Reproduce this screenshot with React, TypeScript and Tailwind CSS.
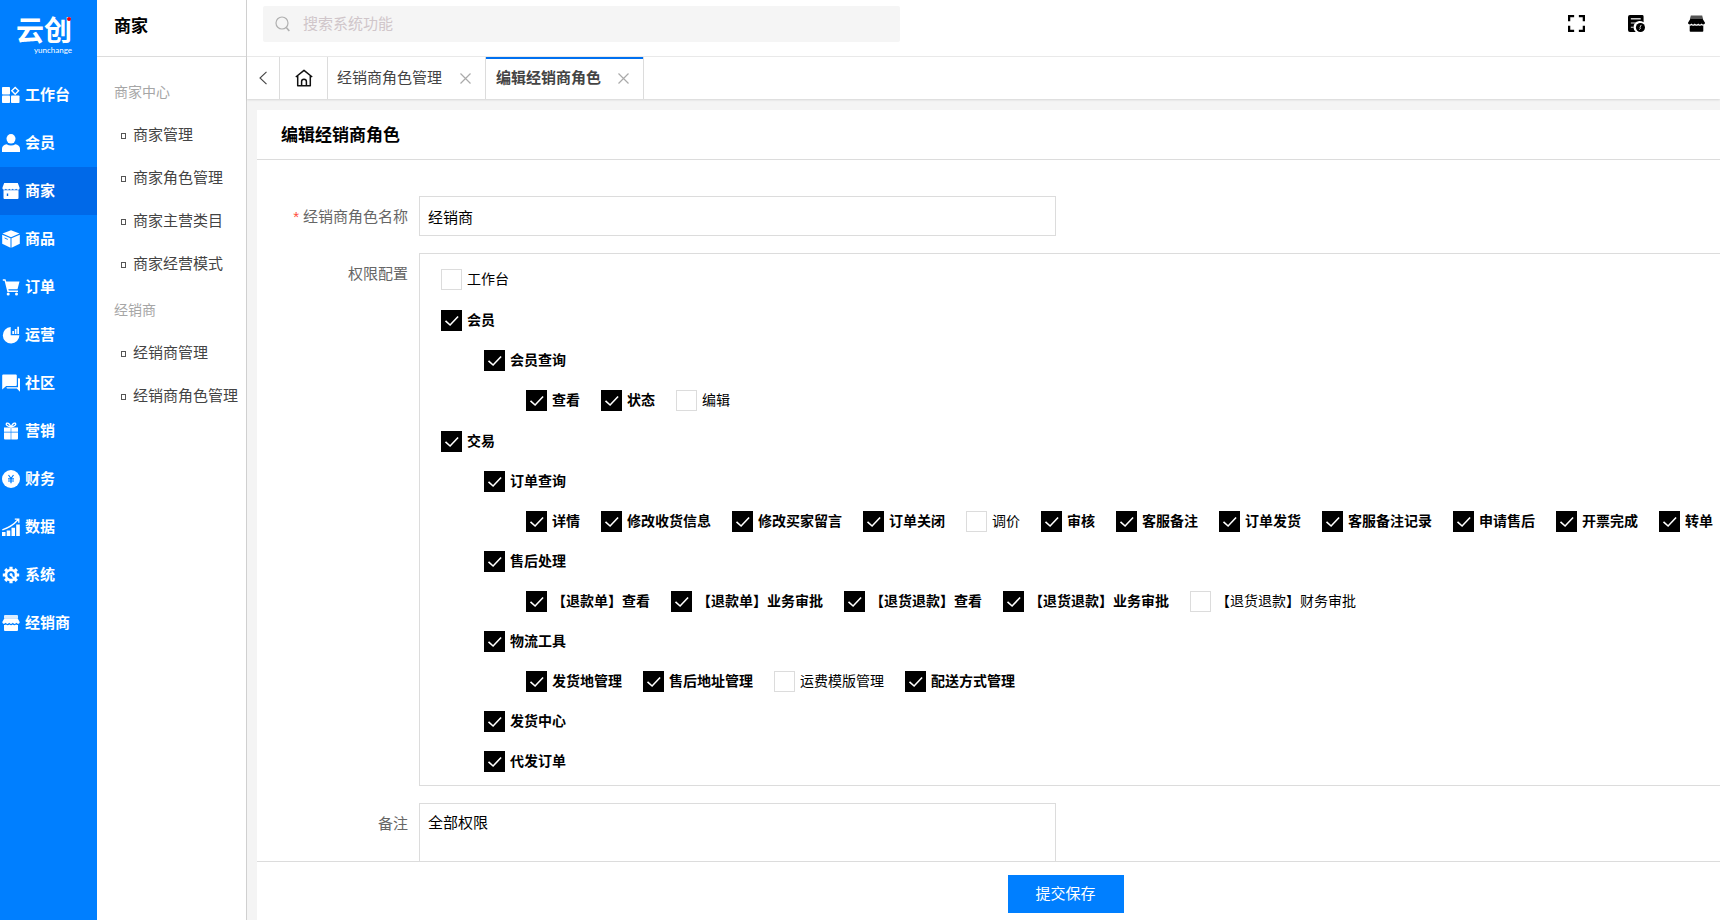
import { useState } from 'react';
import type { ReactNode } from 'react';

interface PermNode {
    name: string;
    checked: boolean;
    children?: PermNode[];
}

const on = (name: string, children?: PermNode[]): PermNode => ({ name, checked: true, children });
const off = (name: string): PermNode => ({ name, checked: false });

const permissions: PermNode[] = [
    off('工作台'),
    on('会员', [on('会员查询', [on('查看'), on('状态'), off('编辑')])]),
    on('交易', [
        on('订单查询', [
            on('详情'),
            on('修改收货信息'),
            on('修改买家留言'),
            on('订单关闭'),
            off('调价'),
            on('审核'),
            on('客服备注'),
            on('订单发货'),
            on('客服备注记录'),
            on('申请售后'),
            on('开票完成'),
            on('转单')
        ]),
        on('售后处理', [
            on('【退款单】查看'),
            on('【退款单】业务审批'),
            on('【退货退款】查看'),
            on('【退货退款】业务审批'),
            off('【退货退款】财务审批')
        ]),
        on('物流工具', [on('发货地管理'), on('售后地址管理'), off('运费模版管理'), on('配送方式管理')]),
        on('发货中心'),
        on('代发订单')
    ])
];

const Icon = ({ children, className = 'size-[18px]' }: { children: ReactNode; className?: string }) => (
    <svg viewBox="0 0 18 18" fill="currentColor" aria-hidden="true" className={`${className} shrink-0`}>
        {children}
    </svg>
);

const navItems: { name: string; icon: ReactNode }[] = [
    {
        name: '工作台',
        icon: (
            <>
                <rect x="0" y="1" width="8" height="7.5" rx="0.8" />
                <rect x="0" y="9.5" width="8" height="7.5" rx="0.8" />
                <rect x="9" y="9.5" width="8.5" height="7.5" rx="0.8" />
                <path d="M13.2 1.4 16.6 4.8 13.2 8.2 9.8 4.8Z" fill="none" stroke="currentColor" strokeWidth="1.4" />
            </>
        )
    },
    {
        name: '会员',
        icon: (
            <>
                <ellipse cx="9" cy="4.8" rx="4.5" ry="4.8" />
                <path d="M0 18v-3.2C0 12 2 10.6 4.6 10.2c1.3.8 2.8 1.2 4.4 1.2s3.100-.4 4.400-1.200C16 10.600 18 12 18 14.800V18Z" />
            </>
        )
    },
    {
        name: '商家',
        icon: (
            <>
                <path d="M2.200 1h13.600L17.500 5.500v1.200c-.4 1.300-2.600 1.300-3.400 0-.8 1.300-2.600 1.300-3.400 0-.8 1.300-2.600 1.300-3.400 0-.8 1.300-2.600 1.300-3.400 0-.8 1.300-2.900 1.300-3.400 0V5.500Z" />
                <path fillRule="evenodd" d="M1.500 8.300h15V16a1 1 0 0 1-1 1h-13a1 1 0 0 1-1-1ZM4.800 11.500v2.500h1.400v-2.500Z" />
            </>
        )
    },
    {
        name: '商品',
        icon: (
            <>
                <path d="M9 .3 17.500 3.600 9 7.200.5 3.600Z" />
                <path d="M.2 4.800 8.500 8.300v9.400L.2 13.800Z" />
                <path d="M17.800 4.800 9.500 8.300v9.400l8.300-3.900Z" />
                <path d="m2.600 8 3.200 1.400" stroke="#007fff" strokeWidth="0.9" />
            </>
        )
    },
    {
        name: '订单',
        icon: (
            <>
                <path d="M.8 1.200h2.700l.7 2.300h13.300l-2 7.700H6.300l.5 1.400h9.200V14H5.400L2.600 2.800H.8Z" />
                <circle cx="6.200" cy="15.900" r="1.500" />
                <circle cx="14.500" cy="15.900" r="1.500" />
            </>
        )
    },
    {
        name: '运营',
        icon: (
            <>
                <path d="M8.700 1v8.300h8.700A8.300 8.300 0 1 1 8.700 1Z" />
                <path d="M10.300 5h1.700v3h-1.700ZM12.800 3h1.700v5h-1.700ZM15.300.800H17V8h-1.700Z" />
            </>
        )
    },
    {
        name: '社区',
        icon: (
            <>
                <path d="M1.200.5h12.600a1 1 0 0 1 1 1v9.600a1 1 0 0 1-1 1H4.200L.2 15.500v-14a1 1 0 0 1 1-1Z" />
                <path d="M16 4.300h1.200a.8.8 0 0 1 .8.800v12.600l-3.200-3.200H5.500a1 1 0 0 1-1-1v-.3H16Z" />
            </>
        )
    },
    {
        name: '营销',
        icon: (
            <>
                <path d="M2 5.500h6.700v4.300H2ZM9.300 5.500H16v4.300H9.300ZM2 10.500h6.700V17.500H3a1 1 0 0 1-1-1ZM9.300 10.500H16v6a1 1 0 0 1-1 1H9.300Z" />
                <path
                    d="M9 5C7.800 2.200 6.300.700 4.900 1.200 3.500 1.900 4.300 4.400 9 5c4.700-.6 5.500-3.100 4.100-3.800C11.700.700 10.200 2.200 9 5Z"
                    fill="none"
                    stroke="currentColor"
                    strokeWidth="1.300"
                />
            </>
        )
    },
    {
        name: '财务',
        icon: (
            <>
                <circle cx="9" cy="9" r="9" />
                <path d="m6.500 5 2.500 3.500L11.500 5M9 8.500v4.800M6 8.800h6M6 11h6" fill="none" stroke="#007fff" strokeWidth="1.200" />
            </>
        )
    },
    {
        name: '数据',
        icon: (
            <>
                <path d="M0 14h3.500v4H0ZM4.700 12.500h3.600V18H4.700ZM9.500 9.700H13V18H9.500ZM14.200 6.500h3.600V18h-3.600Z" />
                <path d="M.3 11.800C6.500 10 11.500 7 16 1.800M12.800 1.200h4v3.600" fill="none" stroke="currentColor" strokeWidth="1.300" />
            </>
        )
    },
    {
        name: '系统',
        icon: (
            <>
                <circle cx="9" cy="9" r="5" fill="none" stroke="currentColor" strokeWidth="2.600" />
                <path
                    d="M9 .8v3M9 14.200v3M.8 9h3M14.200 9h3M3.200 3.200l2.100 2.100M12.700 12.700l2.100 2.100M3.200 14.800l2.100-2.100M12.700 5.300l2.100-2.100"
                    stroke="currentColor"
                    strokeWidth="3.200"
                />
                <path d="m9 9 4.500 4.800" stroke="currentColor" strokeWidth="1.800" />
                <circle cx="9" cy="8.500" r="1.500" />
            </>
        )
    },
    {
        name: '经销商',
        icon: (
            <>
                <path d="M3 1h12a1 1 0 0 1 1 1v2.200H2V2a1 1 0 0 1 1-1Z" opacity="0.850" />
                <path d="M2.400 4.200h13.200L17.700 8c0 2-2.400 2.300-3.300.8-.9 1.500-2.700 1.500-3.600 0-.9 1.500-2.700 1.500-3.600 0-.9 1.500-2.700 1.500-3.600 0C2.700 10.300.3 10 .3 8Z" />
                <path d="M2 11c1 .2 1.600 0 2-.4 1 .9 2.500.9 3.300 0 1 .9 2.500.9 3.400 0 .9.900 2.400.900 3.300 0 .5.400 1.100.600 2 .4V16a1 1 0 0 1-1 1H3a1 1 0 0 1-1-1Z" />
            </>
        )
    }
];

const menuGroups = [
    { title: '商家中心', items: ['商家管理', '商家角色管理', '商家主营类目', '商家经营模式'] },
    { title: '经销商', items: ['经销商管理', '经销商角色管理'] }
];

const SideNav = () => (
    <aside className="w-[97px] shrink-0 bg-[#007fff] text-white">
        <a href="#" className="relative block h-[71px] pt-4 pl-4">
            <span className="block text-[28px] leading-8 font-bold">云创</span>
            <span className="block pl-[18px] font-['Lato'] text-[8px] leading-1">yunchange</span>
            <span className="absolute top-[17px] left-[67px] size-[4px] rounded-full bg-[#e60012]" />
        </a>
        <nav>
            {navItems.map((item) => (
                <a
                    key={item.name}
                    href="#"
                    className={`flex h-12 items-center gap-[5px] pl-0.5 text-[15px] font-bold ${item.name === '商家' ? 'bg-[#0069e8]' : ''}`}
                >
                    <Icon>{item.icon}</Icon>
                    {item.name}
                </a>
            ))}
        </nav>
    </aside>
);

const SubMenu = () => (
    <aside className="w-[150px] shrink-0 border-r border-[#d0d0d0] bg-white">
        <h2 className="h-[57px] border-b border-[#dcdcdc] pl-[17px] text-[17px] leading-[54px] font-bold text-black">商家</h2>
        <div className="pt-3.5">
            {menuGroups.map((group) => (
                <section key={group.title} className="pb-[3px]">
                    <h3 className="pl-[17px] text-sm leading-[43px] text-[#a6a6a6]">{group.title}</h3>
                    <ul>
                        {group.items.map((item) => (
                            <li key={item}>
                                <a href="#" className="flex h-[43px] items-center gap-[7px] pl-6 text-[15px] whitespace-nowrap text-[#444]">
                                    <span className="h-1.5 w-[5px] border border-[#555]" />
                                    {item}
                                </a>
                            </li>
                        ))}
                    </ul>
                </section>
            ))}
        </div>
    </aside>
);

const TopBar = () => (
    <header className="flex h-[57px] shrink-0 items-start justify-between border-b border-[#ebebeb] bg-white pt-1.5 pr-[15px] pl-4">
        <label className="flex h-9 w-[637px] items-center gap-3 rounded-xs bg-[#f5f5f5] pl-3">
            <svg viewBox="0 0 16 16" fill="none" stroke="#b0b0b0" strokeWidth="1.200" className="size-4" aria-hidden="true">
                <circle cx="7" cy="7" r="6" />
                <path d="m11.300 11.500 3 3.500" strokeWidth="1.600" />
            </svg>
            <input
                type="text"
                aria-label="搜索系统功能"
                placeholder="搜索系统功能"
                className="flex-1 bg-transparent text-[15px] outline-none placeholder:text-[#d0c6ca]"
            />
        </label>
        <div className="flex gap-[43px] pt-[9px] text-black">
            <button type="button" aria-label="全屏">
                <Icon className="size-[17px]">
                    <path
                        d="M1.200 6.500V1.200h5.300M11.500 1.200h5.300v5.300M16.800 11.500v5.300h-5.300M6.500 16.800H1.200v-5.300"
                        fill="none"
                        stroke="currentColor"
                        strokeWidth="2.400"
                    />
                </Icon>
            </button>
            <button type="button" aria-label="日志">
                <Icon className="size-[17px]">
                    <path d="M2 0h13a1.500 1.500 0 0 1 1.500 1.500V7.800A6 6 0 0 0 8.200 18H2a2 2 0 0 1-2-2V2a2 2 0 0 1 2-2Z" />
                    <path d="M3 4h10.500" stroke="#ccc" strokeWidth="1.600" />
                    <path d="M3 8.500h5.500M3 13h3" stroke="#ddd" strokeWidth="1.100" />
                    <circle cx="13.200" cy="13.200" r="4.800" />
                    <path d="m14 10.500-1.500 3M11.800 15.500l2-2" stroke="#ddd" strokeWidth="1" />
                </Icon>
            </button>
            <button type="button" aria-label="店铺">
                <Icon className="size-[17px]">
                    <path d="M3 .5h12l1 3.700H2Z" fill="#555" />
                    <path d="M2.400 4.200h13.200L18 8.200c0 2-2.700 2.300-3.600.8-.9 1.500-2.700 1.500-3.600 0-.9 1.500-2.700 1.500-3.600 0-.9 1.500-2.700 1.500-3.600 0C2.700 10.500 0 10.200 0 8.200Z" />
                    <path d="M1.800 11.200c1 .2 1.800 0 2.200-.4 1 .9 2.500.9 3.300 0 1 .9 2.500.9 3.400 0 .9.900 2.400.900 3.300 0 .5.400 1.200.600 2.200.4V17a.8.8 0 0 1-.8.800H2.600a.8.8 0 0 1-.8-.8Z" />
                </Icon>
            </button>
        </div>
    </header>
);

const CloseIcon = () => (
    <svg viewBox="0 0 11 11" stroke="#aaa" strokeWidth="1.200" className="size-[11px]" aria-hidden="true">
        <path d="m.5.5 10 10M10.500.5l-10 10" />
    </svg>
);

const TabBar = () => (
    <div className="relative flex h-[42px] shrink-0 bg-white text-[15px] text-[#444] shadow-[0_1px_2px_rgba(0,0,0,0.12)]">
        <button type="button" aria-label="向左" className="flex w-[33px] items-center justify-center border-r border-[#dcdcdc]">
            <svg viewBox="0 0 8 14" fill="none" stroke="#444" strokeWidth="1.100" className="h-3.5 w-2" aria-hidden="true">
                <path d="M7.500.8 1 7l6.500 6.200" />
            </svg>
        </button>
        <button type="button" aria-label="首页" className="flex w-12 items-center justify-center border-r border-[#dcdcdc]">
            <svg viewBox="0 0 18 18" fill="none" stroke="#111" strokeWidth="1.500" strokeLinejoin="round" className="size-[18px]" aria-hidden="true">
                <path d="M.8 8 9 1.300 17.200 8M2.700 6.800v10h12.600v-10M6.600 16.800v-4.200a2.400 2.400 0 0 1 4.800 0v4.200" />
            </svg>
        </button>
        <div className="flex w-[158px] items-center justify-between border-r border-[#dcdcdc] pr-3.5 pl-[9px] whitespace-nowrap">
            <a href="#">经销商角色管理</a>
            <button type="button" aria-label="关闭 经销商角色管理"><CloseIcon /></button>
        </div>
        <div className="flex w-[158px] items-center justify-between border-r border-[#dcdcdc] pr-3.5 pl-2.5 font-bold whitespace-nowrap shadow-[inset_0_2px_0_#0070f0]">
            <a href="#">编辑经销商角色</a>
            <button type="button" aria-label="关闭 编辑经销商角色"><CloseIcon /></button>
        </div>
    </div>
);

const PermCheckbox = ({ node }: { node: PermNode }) => {
    const [checked, setChecked] = useState(node.checked);
    return (
        <label className={`flex h-10 shrink-0 items-center gap-[5px] text-sm whitespace-nowrap text-black ${checked ? 'font-bold' : ''}`}>
            <span className="grid">
                <input
                    type="checkbox"
                    checked={checked}
                    onChange={(e) => setChecked(e.target.checked)}
                    className="col-start-1 row-start-1 size-[21px] appearance-none border border-[#dcdcdc] bg-white checked:border-black checked:bg-black"
                />
                {checked && (
                    <svg viewBox="0 0 21 21" fill="none" stroke="#fff" strokeWidth="1.600" className="pointer-events-none col-start-1 row-start-1 size-[21px]" aria-hidden="true">
                        <path d="m4.500 10.800 4.600 4.200 8-8.500" />
                    </svg>
                )}
            </span>
            {node.name}
        </label>
    );
};

const PermissionTree = () => (
    <div className="flex flex-1 flex-col gap-px overflow-hidden border border-r-0 border-[#dcdcdc] pt-[5px] pb-1 pl-[21px]">
        {permissions.map((top) => (
            <div key={top.name}>
                <PermCheckbox node={top} />
                {top.children?.map((page) => (
                    <div key={page.name} className="pl-[43px]">
                        <PermCheckbox node={page} />
                        {page.children && (
                            <div className="flex gap-[21px] pl-[42px]">
                                {page.children.map((action) => (
                                    <PermCheckbox key={action.name} node={action} />
                                ))}
                            </div>
                        )}
                    </div>
                ))}
            </div>
        ))}
    </div>
);

export default function App() {
    const [roleName, setRoleName] = useState('经销商');
    const [remark, setRemark] = useState('全部权限');

    return (
        <div className="flex h-screen overflow-hidden bg-[#f4f4f4] font-['Liberation_Sans','Noto_Sans_CJK_SC',sans-serif]">
            <SideNav />
            <SubMenu />
            <div className="flex min-w-0 flex-1 flex-col">
                <TopBar />
                <TabBar />
                <main className="mt-[11px] ml-2.5 flex min-h-0 flex-1 flex-col bg-white">
                    <h1 className="h-[50px] shrink-0 border-b border-[#dcdcdc] pl-6 text-[17px] leading-[52px] font-bold text-black">编辑经销商角色</h1>
                    <form id="role-form" className="flex min-h-0 flex-1 flex-col gap-[17px] overflow-hidden pt-9 text-[15px]">
                        <div className="flex shrink-0">
                            <label htmlFor="role-name" className="w-[162px] shrink-0 pr-[11px] text-right leading-[42px] text-[#666]">
                                <span className="mr-1 text-[#ff4d3c]">*</span>经销商角色名称
                            </label>
                            <input
                                id="role-name"
                                value={roleName}
                                onChange={(e) => setRoleName(e.target.value)}
                                className="h-10 w-[637px] border border-[#dcdcdc] px-2 text-black outline-none"
                            />
                        </div>
                        <div className="-mt-0.5 flex shrink-0">
                            <span className="w-[162px] shrink-0 pr-[11px] text-right leading-[42px] text-[#666]">权限配置</span>
                            <PermissionTree />
                        </div>
                        <div className="flex shrink-0">
                            <label htmlFor="remark" className="w-[162px] shrink-0 pr-[11px] text-right leading-[42px] text-[#666]">备注</label>
                            <textarea
                                id="remark"
                                value={remark}
                                onChange={(e) => setRemark(e.target.value)}
                                className="h-[100px] w-[637px] resize-none border border-[#dcdcdc] px-2 py-[7px] leading-6 text-black outline-none"
                            />
                        </div>
                    </form>
                    <footer className="flex h-[59px] shrink-0 items-start justify-center border-t border-[#dcdcdc] pt-[13px] pl-[154px]">
                        <button type="submit" form="role-form" className="h-[38px] w-[116px] bg-[#007fff] text-[15px] text-white">
                            提交保存
                        </button>
                    </footer>
                </main>
            </div>
        </div>
    );
}
